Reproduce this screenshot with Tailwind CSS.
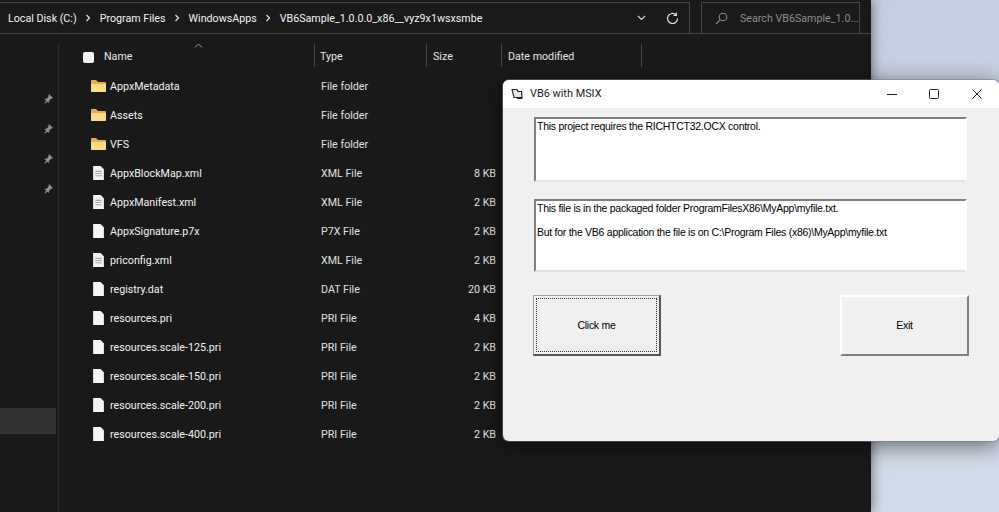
<!DOCTYPE html>
<html lang="en">
<head>
  <meta charset="UTF-8" />
  <title>VB6 with MSIX</title>
  <script src="https://cdn.jsdelivr.net/npm/@tailwindcss/browser@4"></script>
</head>
<body class="bg-[#d0d9e7]">
  <div class="relative w-[999px] h-[512px] overflow-hidden bg-gradient-to-b from-[#c5cedf] to-[#d2dbe8] font-['Roboto',sans-serif]">

    <!-- explorer window -->
    <div class="absolute left-0 top-0 w-[871px] h-[512px] flex flex-col bg-[#191919] text-[#f2f2f2] text-[10.7px] shadow-[0_0_12px_rgba(0,0,0,0.55)]">
      <div class="h-[34px] pt-[2px] flex bg-[#191919] border-b border-[#444444] shrink-0">
        <div class="w-[691px] -ml-px h-[32px] border border-[#444444] bg-[#1a1a1a] flex items-center pl-[8px] shrink-0">
          <span class="pt-[2px]">Local Disk (C:)</span>
          <svg class="mx-[8.5px]" width="6" height="8" viewBox="0 0 6 8" fill="none" stroke="#e8e8e8" stroke-width="1.2"><path d="M1.5 1l3 3-3 3"/></svg>
          <span class="pt-[2px]">Program Files</span>
          <svg class="mx-[8.5px]" width="6" height="8" viewBox="0 0 6 8" fill="none" stroke="#e8e8e8" stroke-width="1.2"><path d="M1.5 1l3 3-3 3"/></svg>
          <span class="pt-[2px]">WindowsApps</span>
          <svg class="mx-[8.5px]" width="6" height="8" viewBox="0 0 6 8" fill="none" stroke="#e8e8e8" stroke-width="1.2"><path d="M1.5 1l3 3-3 3"/></svg>
          <span class="pt-[2px]">VB6Sample_1.0.0.0_x86__vyz9x1wsxsmbe</span>
          <svg class="ml-auto mr-[20px]" width="9" height="6" viewBox="0 0 9 6" fill="none" stroke="#d8d8d8" stroke-width="1.1"><path d="M1 1l3.5 3.5L8 1"/></svg>
          <svg class="mr-[10px]" width="13" height="13" viewBox="0 0 13 13" fill="none" stroke="#e4e4e4" stroke-width="1.2"><path d="M11.5 6.5a5 5 0 1 1-1.6-3.7"/><path d="M10.3 0.6v2.7H7.6"/></svg>
        </div>
        <div class="ml-[11px] w-[159px] h-[32px] border border-[#444444] bg-[#1a1a1a] flex items-center pl-[13px] text-[#8c8c8c] shrink-0">
          <svg class="mr-[12px] shrink-0" width="13" height="13" viewBox="0 0 13 13" fill="none" stroke="#8c8c8c" stroke-width="1.1"><circle cx="8" cy="5" r="3.8"/><path d="M5.2 7.8L1 12"/></svg>
          <span class="pt-[2px] whitespace-nowrap">Search VB6Sample_1.0...</span>
        </div>
      </div>

      <div class="flex flex-1 min-h-0">
        <!-- nav pane -->
        <div class="w-[58px] shrink-0 flex flex-col">
          <div class="flex flex-col items-end pr-[5px] pt-[60px] gap-[20px]">
            <svg width="10" height="10" viewBox="0 0 10 10" fill="#8f8f8f"><path d="M6 0l4 4-1 .6-.6-.2L6.3 6.5 6 9 4.6 7.8 1 10l2.2-3.6L1 5l2.5-.3L5.6 2.6 5.4 2z"/></svg>
            <svg width="10" height="10" viewBox="0 0 10 10" fill="#8f8f8f"><path d="M6 0l4 4-1 .6-.6-.2L6.3 6.5 6 9 4.6 7.8 1 10l2.2-3.6L1 5l2.5-.3L5.6 2.6 5.4 2z"/></svg>
            <svg width="10" height="10" viewBox="0 0 10 10" fill="#8f8f8f"><path d="M6 0l4 4-1 .6-.6-.2L6.3 6.5 6 9 4.6 7.8 1 10l2.2-3.6L1 5l2.5-.3L5.6 2.6 5.4 2z"/></svg>
            <svg width="10" height="10" viewBox="0 0 10 10" fill="#8f8f8f"><path d="M6 0l4 4-1 .6-.6-.2L6.3 6.5 6 9 4.6 7.8 1 10l2.2-3.6L1 5l2.5-.3L5.6 2.6 5.4 2z"/></svg>
          </div>
          <div class="mt-[214px] h-[26px] w-[56px] bg-[#333333]"></div>
        </div>
        <div class="w-px h-[478px] mt-[10px] bg-[#2c2c2c]"></div>

        <!-- file list -->
        <div class="flex-1 pt-[10px]">
          <div class="relative h-[23px] flex items-center text-[#e6e6e6]">
            <div class="w-[256px] h-full flex items-center border-r border-[#444444] pl-[24px] pt-[4px] shrink-0">
              <span class="w-[11px] h-[11px] -mt-[1px] rounded-[2px] bg-[#f2f2f2]"></span>
              <span class="ml-[10px]">Name</span>
            </div>
            <div class="w-[112px] h-full flex items-center border-r border-[#444444] pl-[5px] pt-[4px] shrink-0">Type</div>
            <div class="w-[75px] h-full flex items-center border-r border-[#444444] pl-[6px] pt-[4px] shrink-0">Size</div>
            <div class="w-[140px] h-full flex items-center border-r border-[#444444] pl-[6px] pt-[4px] shrink-0">Date modified</div>
            <svg class="absolute left-[135px] top-[-1px]" width="9" height="5" viewBox="0 0 9 5" fill="none" stroke="#9a9a9a"><path d="M1 4.5l3.5-3.5L8 4.5"/></svg>
          </div>

          <div class="mt-[6px] flex flex-col [&_svg]:-mt-[2px]">
            <div class="h-[29px] flex items-center">
              <div class="w-[257px] pl-[32px] flex items-center gap-[4px] shrink-0">
                <svg width="15" height="12" viewBox="0 0 15 12"><path d="M0 1a1 1 0 0 1 1-1h4l2 2h7a1 1 0 0 1 1 1v8a1 1 0 0 1-1 1H1a1 1 0 0 1-1-1z" fill="#e6b13f"/><path d="M0 4h15v7a1 1 0 0 1-1 1H1a1 1 0 0 1-1-1z" fill="#fbdc83"/></svg>
                <span>AppxMetadata</span>
              </div>
              <div class="w-[112px] pl-[5px] shrink-0 text-[#e0e0e0]">File folder</div>
            </div>
            <div class="h-[29px] flex items-center">
              <div class="w-[257px] pl-[32px] flex items-center gap-[4px] shrink-0">
                <svg width="15" height="12" viewBox="0 0 15 12"><path d="M0 1a1 1 0 0 1 1-1h4l2 2h7a1 1 0 0 1 1 1v8a1 1 0 0 1-1 1H1a1 1 0 0 1-1-1z" fill="#e6b13f"/><path d="M0 4h15v7a1 1 0 0 1-1 1H1a1 1 0 0 1-1-1z" fill="#fbdc83"/></svg>
                <span>Assets</span>
              </div>
              <div class="w-[112px] pl-[5px] shrink-0 text-[#e0e0e0]">File folder</div>
            </div>
            <div class="h-[29px] flex items-center">
              <div class="w-[257px] pl-[32px] flex items-center gap-[4px] shrink-0">
                <svg width="15" height="12" viewBox="0 0 15 12"><path d="M0 1a1 1 0 0 1 1-1h4l2 2h7a1 1 0 0 1 1 1v8a1 1 0 0 1-1 1H1a1 1 0 0 1-1-1z" fill="#e6b13f"/><path d="M0 4h15v7a1 1 0 0 1-1 1H1a1 1 0 0 1-1-1z" fill="#fbdc83"/></svg>
                <span>VFS</span>
              </div>
              <div class="w-[112px] pl-[5px] shrink-0 text-[#e0e0e0]">File folder</div>
            </div>

            <div class="h-[29px] flex items-center">
              <div class="w-[257px] pl-[34px] flex items-center gap-[6px] shrink-0">
                <svg width="11" height="14" viewBox="0 0 10 13"><path d="M0 0h7l3 3v10H0z" fill="#f2f2f2"/><path d="M2 5h6M2 7h6M2 9h6" stroke="#a8a8a8"/></svg>
                <span>AppxBlockMap.xml</span>
              </div>
              <div class="w-[112px] pl-[5px] shrink-0 text-[#e0e0e0]">XML File</div>
              <div class="w-[68px] text-right shrink-0 text-[#e0e0e0]">8 KB</div>
            </div>
            <div class="h-[29px] flex items-center">
              <div class="w-[257px] pl-[34px] flex items-center gap-[6px] shrink-0">
                <svg width="11" height="14" viewBox="0 0 10 13"><path d="M0 0h7l3 3v10H0z" fill="#f2f2f2"/><path d="M2 5h6M2 7h6M2 9h6" stroke="#a8a8a8"/></svg>
                <span>AppxManifest.xml</span>
              </div>
              <div class="w-[112px] pl-[5px] shrink-0 text-[#e0e0e0]">XML File</div>
              <div class="w-[68px] text-right shrink-0 text-[#e0e0e0]">2 KB</div>
            </div>
            <div class="h-[29px] flex items-center">
              <div class="w-[257px] pl-[34px] flex items-center gap-[6px] shrink-0">
                <svg width="11" height="14" viewBox="0 0 10 13"><path d="M0 0h7l3 3v10H0z" fill="#f5f5f5"/></svg>
                <span>AppxSignature.p7x</span>
              </div>
              <div class="w-[112px] pl-[5px] shrink-0 text-[#e0e0e0]">P7X File</div>
              <div class="w-[68px] text-right shrink-0 text-[#e0e0e0]">2 KB</div>
            </div>
            <div class="h-[29px] flex items-center">
              <div class="w-[257px] pl-[34px] flex items-center gap-[6px] shrink-0">
                <svg width="11" height="14" viewBox="0 0 10 13"><path d="M0 0h7l3 3v10H0z" fill="#f2f2f2"/><path d="M2 5h6M2 7h6M2 9h6" stroke="#a8a8a8"/></svg>
                <span>priconfig.xml</span>
              </div>
              <div class="w-[112px] pl-[5px] shrink-0 text-[#e0e0e0]">XML File</div>
              <div class="w-[68px] text-right shrink-0 text-[#e0e0e0]">2 KB</div>
            </div>
            <div class="h-[29px] flex items-center">
              <div class="w-[257px] pl-[34px] flex items-center gap-[6px] shrink-0">
                <svg width="11" height="14" viewBox="0 0 10 13"><path d="M0 0h7l3 3v10H0z" fill="#f5f5f5"/></svg>
                <span>registry.dat</span>
              </div>
              <div class="w-[112px] pl-[5px] shrink-0 text-[#e0e0e0]">DAT File</div>
              <div class="w-[68px] text-right shrink-0 text-[#e0e0e0]">20 KB</div>
            </div>
            <div class="h-[29px] flex items-center">
              <div class="w-[257px] pl-[34px] flex items-center gap-[6px] shrink-0">
                <svg width="11" height="14" viewBox="0 0 10 13"><path d="M0 0h7l3 3v10H0z" fill="#f5f5f5"/></svg>
                <span>resources.pri</span>
              </div>
              <div class="w-[112px] pl-[5px] shrink-0 text-[#e0e0e0]">PRI File</div>
              <div class="w-[68px] text-right shrink-0 text-[#e0e0e0]">4 KB</div>
            </div>
            <div class="h-[29px] flex items-center">
              <div class="w-[257px] pl-[34px] flex items-center gap-[6px] shrink-0">
                <svg width="11" height="14" viewBox="0 0 10 13"><path d="M0 0h7l3 3v10H0z" fill="#f5f5f5"/></svg>
                <span>resources.scale-125.pri</span>
              </div>
              <div class="w-[112px] pl-[5px] shrink-0 text-[#e0e0e0]">PRI File</div>
              <div class="w-[68px] text-right shrink-0 text-[#e0e0e0]">2 KB</div>
            </div>
            <div class="h-[29px] flex items-center">
              <div class="w-[257px] pl-[34px] flex items-center gap-[6px] shrink-0">
                <svg width="11" height="14" viewBox="0 0 10 13"><path d="M0 0h7l3 3v10H0z" fill="#f5f5f5"/></svg>
                <span>resources.scale-150.pri</span>
              </div>
              <div class="w-[112px] pl-[5px] shrink-0 text-[#e0e0e0]">PRI File</div>
              <div class="w-[68px] text-right shrink-0 text-[#e0e0e0]">2 KB</div>
            </div>
            <div class="h-[29px] flex items-center">
              <div class="w-[257px] pl-[34px] flex items-center gap-[6px] shrink-0">
                <svg width="11" height="14" viewBox="0 0 10 13"><path d="M0 0h7l3 3v10H0z" fill="#f5f5f5"/></svg>
                <span>resources.scale-200.pri</span>
              </div>
              <div class="w-[112px] pl-[5px] shrink-0 text-[#e0e0e0]">PRI File</div>
              <div class="w-[68px] text-right shrink-0 text-[#e0e0e0]">2 KB</div>
            </div>
            <div class="h-[29px] flex items-center">
              <div class="w-[257px] pl-[34px] flex items-center gap-[6px] shrink-0">
                <svg width="11" height="14" viewBox="0 0 10 13"><path d="M0 0h7l3 3v10H0z" fill="#f5f5f5"/></svg>
                <span>resources.scale-400.pri</span>
              </div>
              <div class="w-[112px] pl-[5px] shrink-0 text-[#e0e0e0]">PRI File</div>
              <div class="w-[68px] text-right shrink-0 text-[#e0e0e0]">2 KB</div>
            </div>
          </div>
        </div>
      </div>
    </div>

    <!-- VB6 dialog -->
    <div class="absolute left-[503px] top-[80px] w-[496px] h-[361px] rounded-[6px] overflow-hidden bg-[#f0f0f0] flex flex-col shadow-[0_0_0_1px_rgba(120,120,120,0.5),0_4px_22px_rgba(0,0,0,0.55)]">
      <div class="h-[28px] bg-white flex items-center shrink-0 pl-[8px] pb-[1px]">
        <svg width="13" height="12" viewBox="0 0 13 12" fill="none" stroke="#222" stroke-width="1.1"><path d="M1 1.5h5l1 2h3.5l.5 6H3z" fill="#dfe6ee"/><path d="M6 10.5h5.5"/></svg>
        <span class="ml-[6px] pt-[2px] text-[10.9px] text-[#1a1a1a]">VB6 with MSIX</span>
        <svg class="ml-auto mr-[32px]" width="10" height="10" viewBox="0 0 10 10" stroke="#222"><path d="M0 5.5h10"/></svg>
        <svg class="mr-[33px]" width="10" height="10" viewBox="0 0 10 10" fill="none" stroke="#222"><rect x="0.5" y="0.5" width="9" height="9" rx="1"/></svg>
        <svg class="mr-[17px]" width="10" height="10" viewBox="0 0 10 10" stroke="#222"><path d="M0.5 0.5l9 9M9.5 0.5l-9 9"/></svg>
      </div>

      <div class="flex-1 pt-[9px] pl-[31px] pr-[32px] font-['Liberation_Sans',sans-serif] text-[10.5px] tracking-[-0.27px] leading-[13px] text-black">
        <div class="h-[65px] bg-white border-2 border-t-[#7f7f7f] border-l-[#7f7f7f] border-r-white border-b-[#e4e4e4] pl-[1px] pt-[1px]">This project requires the RICHTCT32.OCX control.</div>
        <div class="mt-[17px] h-[73px] bg-white border-2 border-t-[#7f7f7f] border-l-[#7f7f7f] border-r-white border-b-[#e4e4e4] pl-[1px] pt-[1px]">
          <p>This file is in the packaged folder ProgramFilesX86\MyApp\myfile.txt.</p>
          <p class="mt-[11px]">But for the VB6 application the file is on C:\Program Files (x86)\MyApp\myfile.txt</p>
        </div>
        <div class="mt-[23px] -ml-px -mr-[2px] flex justify-between">
          <div class="w-[128px] h-[61px] p-[2px] bg-[#f0f0f0] border border-t-[#a0a0a0] border-l-[#a0a0a0] border-r-[#555] border-b-[#555] border-b-2 border-r-2">
            <div class="h-full flex items-center justify-center border border-dotted border-[#333]">Click me</div>
          </div>
          <div class="w-[129px] h-[61px] flex items-center justify-center bg-[#f0f0f0] border-2 border-t-white border-l-white border-r-[#7f7f7f] border-b-[#7f7f7f]">Exit</div>
        </div>
      </div>
    </div>
  </div>
</body>
</html>
